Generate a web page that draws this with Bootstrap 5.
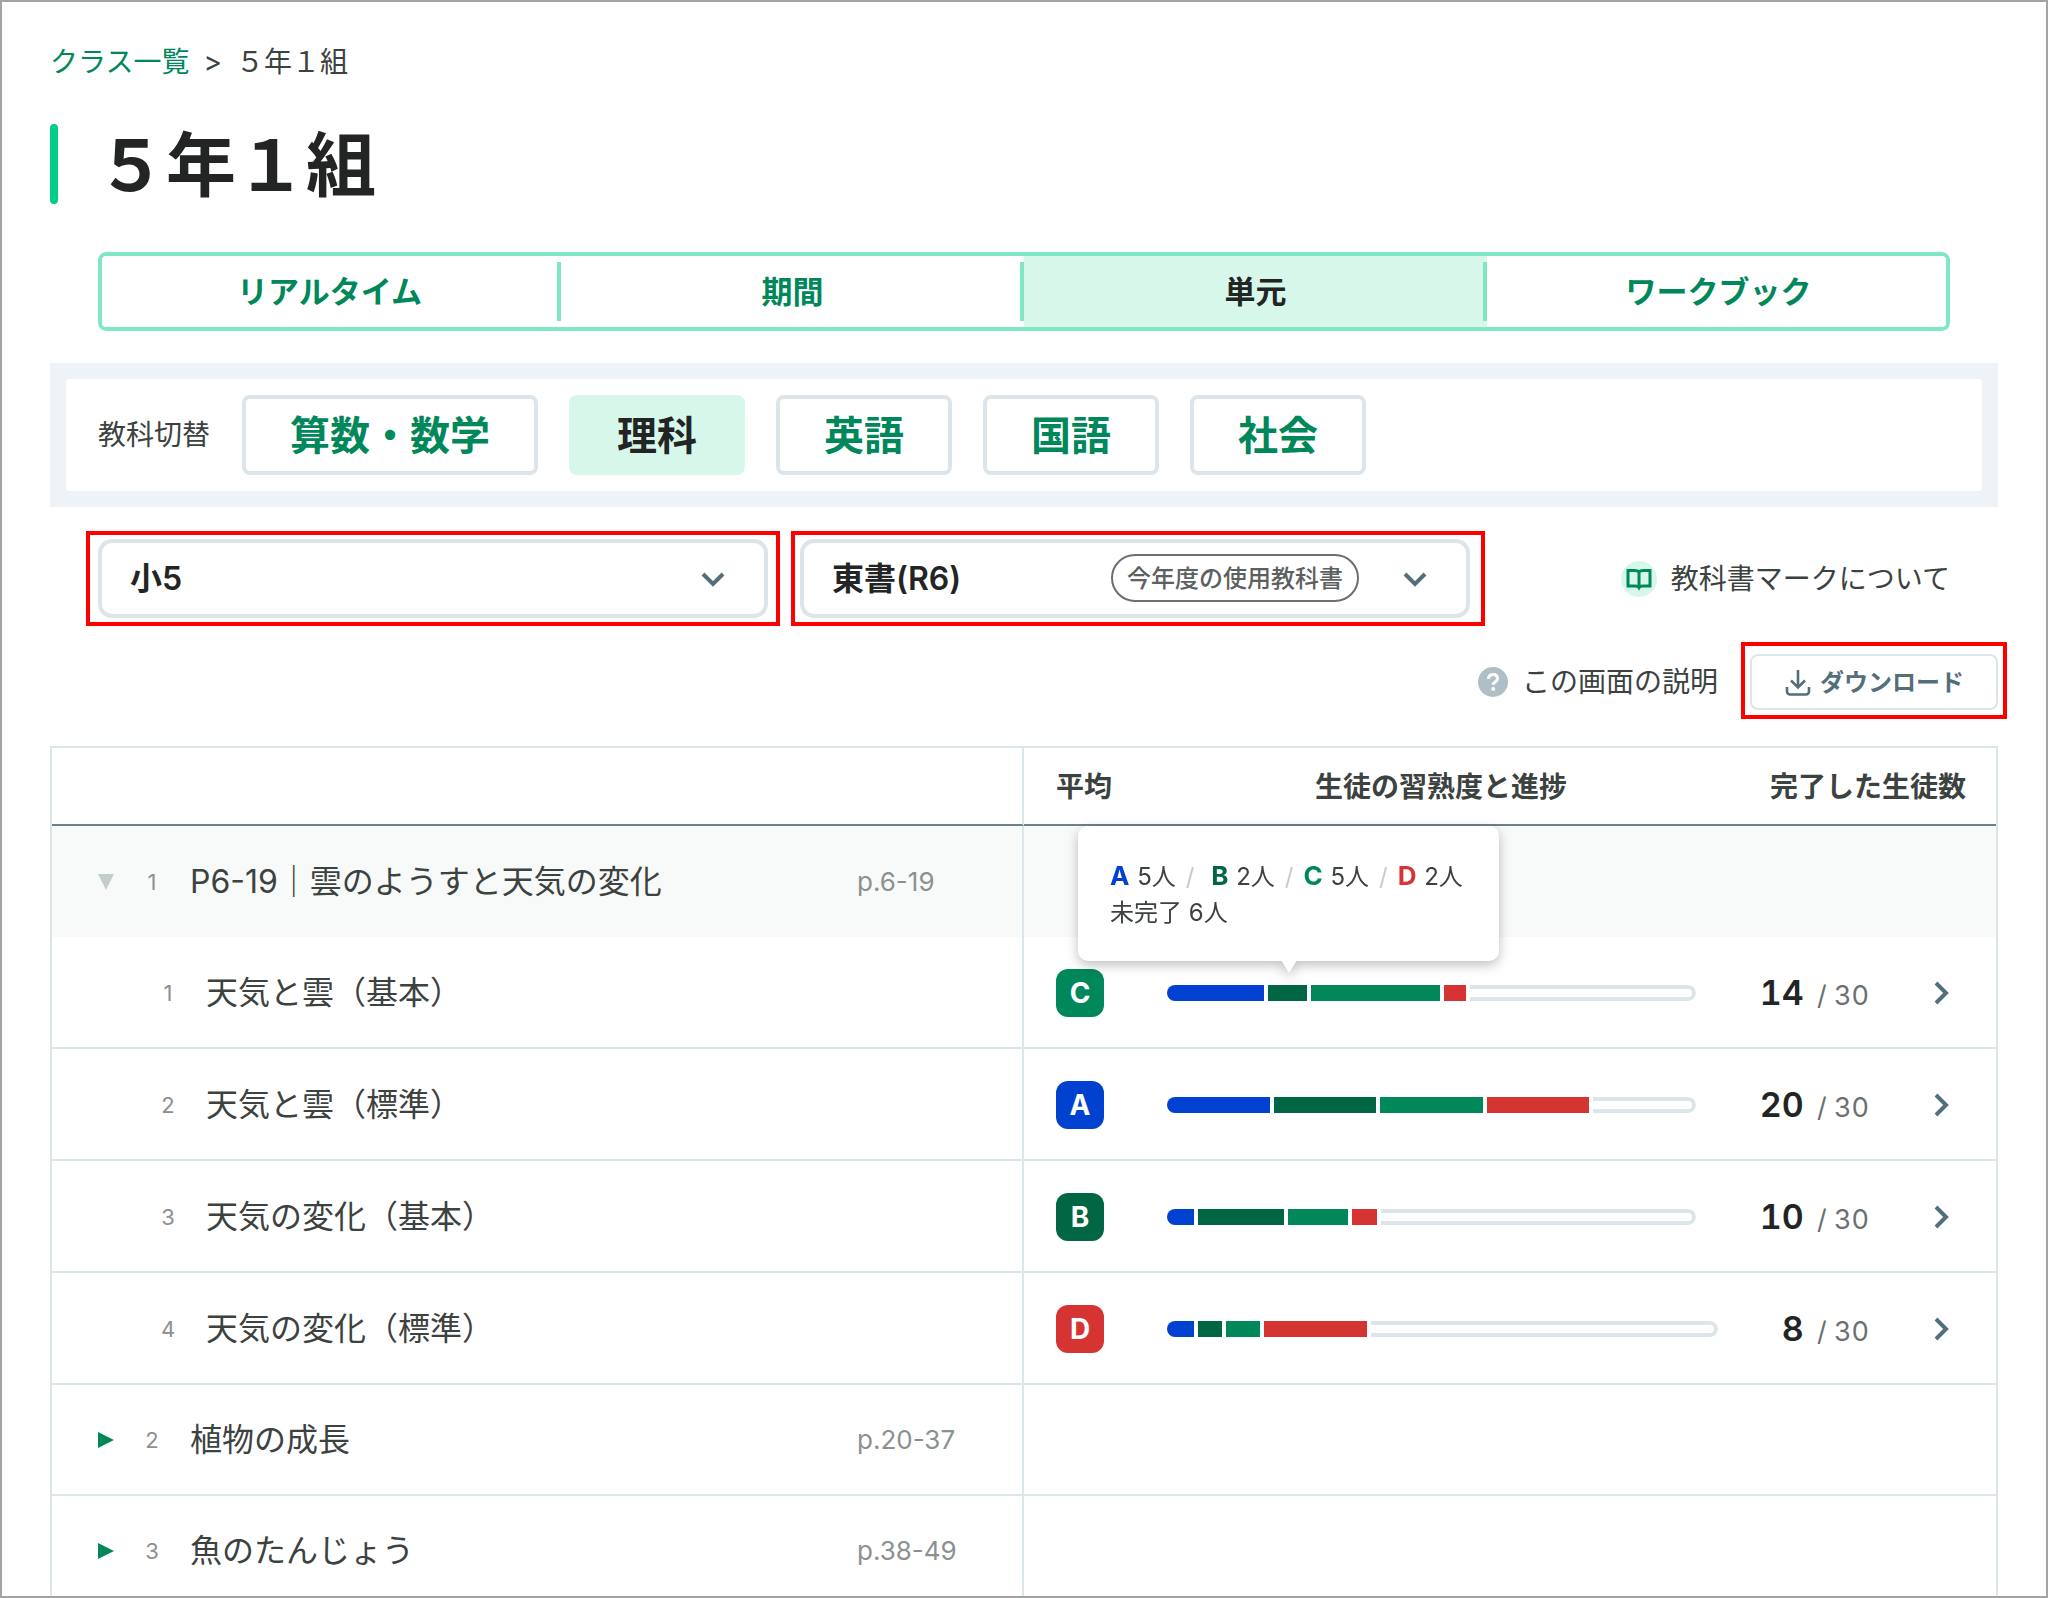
<!DOCTYPE html>
<html lang="ja">
<head>
<meta charset="utf-8">
<meta name="viewport" content="width=device-width, initial-scale=1">
<title>5年1組</title>
<link href="https://cdn.jsdelivr.net/npm/bootstrap@5.3.0/dist/css/bootstrap.min.css" rel="stylesheet">
<style>
:root { --green: #00875a; --dark-green: #006644; --mint: #d8f7eb; --mint-line: #80e7c3; --line: #dce5ea; --slate: #546e7a; --blue: #0041d0; --red: #d63333; --ink: #222524; --text: #3c4240; --muted: #8b9190; }
body { font-family: Inter, "Noto Sans CJK JP", sans-serif; font-size: 28px; line-height: 40px; color: var(--text); }
.page-frame { border: 2px solid #a3a3a3; padding: 38px 48px 0; scrollbar-width: none; }
.crumbs { height: 44px; gap: 14px; }
.crumbs a, .side-link { text-decoration: none; }
.crumbs a { color: var(--green); }
.page-title { height: 80px; line-height: 84px; font-size: 70px; font-weight: 700; color: var(--ink); margin: 40px 0 48px; }
.page-title::before { content: ""; width: 8px; height: 80px; border-radius: 4px; background: #00ce85; margin-right: 38px; }
.inset { margin-left: 48px; margin-right: 48px; }
.view-tabs { position: relative; height: 79px; border-radius: 8px; overflow: hidden; }
.view-tabs::after { content: ""; position: absolute; inset: 0; border: 4px solid var(--mint-line); border-radius: 8px; pointer-events: none; }
.view-tabs .nav-link { position: relative; height: 79px; padding: 0; border-radius: 0; line-height: 79px; font-size: 31px; font-weight: 700; color: var(--green); }
.view-tabs .nav-link.active { background: var(--mint); color: var(--ink); }
.view-tabs .nav-item:not(:last-child) .nav-link::after { content: ""; position: absolute; right: 0; top: 10px; bottom: 10px; width: 4px; background: var(--mint-line); }
.subject-panel { margin-top: 32px; padding: 16px; background: #eef3f8; }
.subject-inner { padding: 16px 32px; gap: 32px; background: #fff; border-radius: 4px; }
.subject-list { gap: 31px; }
.btn-subject { height: 80px; padding: 2px 44px 0; border: 4px solid var(--line); border-radius: 8px; font-size: 40px; line-height: 70px; font-weight: 700; color: var(--green); background: #fff; }
.btn-subject.active { background: var(--mint); border-color: var(--mint); color: var(--ink); }
.filters { margin-top: 32px; gap: 32px; }
.marked { position: relative; }
.marked::after { content: ""; position: absolute; inset: -8px -12px; border: 4px solid #f00; pointer-events: none; }
.marked-book::after { inset: -8px -15px -8px -9px; }
.marked-download::after { inset: -12px -9px -9px; }
.filter-box { width: 670px; }
.filter-box .form-select { height: 79px; border: 4px solid var(--line); border-radius: 14px; padding: 0 28px; font-size: 32px; font-weight: 600; color: var(--ink); background: #fff; }
.filter-box svg { position: absolute; right: 43px; top: 32px; pointer-events: none; }
.year-pill { position: absolute; right: 111px; top: 15px; height: 48px; padding: 0 14px; border: 2px solid #6b6f6e; border-radius: 24px; font-size: 24px; line-height: 46px; font-weight: 500; color: #5c6160; pointer-events: none; }
.side-link { color: var(--text); gap: 14px; }
.actions { margin: 36px 0; gap: 32px; }
.btn-download { height: 56px; padding: 2px 32px 0; border: 2px solid var(--line); border-radius: 8px; font-size: 24px; line-height: 50px; font-weight: 700; color: var(--slate); background: #fff; }
.units { table-layout: fixed; border-collapse: separate; border-spacing: 0; border: 2px solid var(--line); color: var(--text); --bs-table-bg: transparent; }
.units th, .units td { padding: 0; vertical-align: middle; border-bottom: 2px solid var(--line); color: inherit; }
.units th:first-child, .units td:first-child { border-right: 2px solid var(--line); }
.units th { height: 78px; padding-top: 2px; font-weight: 700; border-bottom-color: #6b828e; }
.units thead th:first-child { border-bottom-color: #6b828e; }
.col-grade { width: 88px; }
.col-done { width: 226px; }
.units tr.chapter td { height: 111px; }
.units tr.lesson td { height: 112px; padding-top: 2px; }
.units tr.open td { background: #f8faf9; border-bottom: 0; }
.unit-name { padding-left: 46px; font-size: 32px; line-height: 48px; }
.lesson .unit-name { padding-left: 94px; }
.toggle { border: 0; padding: 0; background: none; line-height: 0; width: 16px; margin-right: 16px; }
.unit-no { width: 44px; margin-right: 16px; text-align: center; font-size: 22px; color: var(--muted); }
.unit-pages { width: 165px; font-size: 26px; color: var(--muted); }
.grade { width: 48px; height: 48px; margin-left: 32px; border-radius: 12px; color: #fff; font-size: 28px; line-height: 48px; font-weight: 700; text-align: center; }
.result { padding-left: 55px; padding-right: 46px; }
.meter { height: 16px; gap: 4px; border-radius: 8px; overflow: hidden; }
.meter span { flex: none; }
.meter .rest { flex: 1 1 0; border: 4px solid var(--line); border-left: 0; border-radius: 0 8px 8px 0; }
.bg-a { background: var(--blue); } .bg-b { background: var(--dark-green); } .bg-c { background: var(--green); } .bg-d { background: var(--red); }
.tx-a { color: var(--blue); } .tx-b { color: var(--dark-green); } .tx-c { color: var(--green); } .tx-d { color: var(--red); }
.tally { margin-left: 64px; margin-right: 64px; font-size: 27px; line-height: 44px; padding-top: 2px; color: #6b706f; font-variant-numeric: tabular-nums; }
.tally strong { font-size: 34px; font-weight: 600; color: var(--ink); margin-right: 6px; }
.meter-wrap { position: relative; }
.tip { position: absolute; left: -89px; bottom: 40px; width: 421px; height: 135px; padding: 32px; background: #fff; border-radius: 10px; font-size: 24px; line-height: 36px; white-space: nowrap; filter: drop-shadow(0 4px 6px rgba(0, 0, 0, .25)); }
.tip::after { content: ""; position: absolute; left: 203px; top: 134px; border: solid transparent; border-width: 13px 8px 0; border-top-color: #fff; }
.tip b { font-size: 26px; margin-right: 1px; }
.tip i { font-style: normal; color: #c3cecb; margin: 0 10px; }
</style>
</head>
<body>
<div class="page-frame vh-100 overflow-auto">
  <nav class="crumbs d-flex align-items-center" aria-label="パンくず">
    <a href="#">クラス一覧</a><span>&gt;</span><span>５年１組</span>
  </nav>
  <h1 class="page-title d-flex">５年１組</h1>

  <ul class="view-tabs nav nav-justified flex-nowrap inset">
    <li class="nav-item"><a class="nav-link" href="#">リアルタイム</a></li>
    <li class="nav-item"><a class="nav-link" href="#">期間</a></li>
    <li class="nav-item"><a class="nav-link active" aria-current="page" href="#">単元</a></li>
    <li class="nav-item"><a class="nav-link" href="#">ワークブック</a></li>
  </ul>

  <section class="subject-panel">
    <div class="subject-inner d-flex align-items-center">
      <span>教科切替</span>
      <div class="subject-list d-flex">
        <button type="button" class="btn btn-subject">算数・数学</button>
        <button type="button" class="btn btn-subject active">理科</button>
        <button type="button" class="btn btn-subject">英語</button>
        <button type="button" class="btn btn-subject">国語</button>
        <button type="button" class="btn btn-subject">社会</button>
      </div>
    </div>
  </section>

  <div class="filters inset d-flex align-items-center">
    <div class="filter-box marked">
      <select class="form-select" aria-label="学年"><option>小5</option></select>
      <svg width="24" height="17" viewBox="0 0 24 17" fill="none" stroke="#546e7a" stroke-width="4"><path d="M2 3l10 10L22 3"/></svg>
    </div>
    <div class="filter-box marked marked-book">
      <select class="form-select" aria-label="教科書"><option>東書(R6)</option></select>
      <span class="year-pill">今年度の使用教科書</span>
      <svg width="24" height="17" viewBox="0 0 24 17" fill="none" stroke="#546e7a" stroke-width="4"><path d="M2 3l10 10L22 3"/></svg>
    </div>
    <a href="#" class="side-link ms-auto d-flex align-items-center">
      <svg width="36" height="36" viewBox="0 0 36 36"><circle cx="18" cy="18" r="18" fill="#d8f7eb"/><path d="M18 11c-1-1.500-3-1.500-5-1.500H7V25h7c2 0 3.500.5 4 1.500.5-1 2-1.500 4-1.500h7V9.500h-6c-2 0-4 0-5 1.500zM18 11v15" fill="none" stroke="#00875a" stroke-width="3"/></svg>
      <span>教科書マークについて</span>
    </a>
  </div>

  <div class="actions d-flex justify-content-end align-items-center">
    <a href="#" class="side-link d-flex align-items-center">
      <svg width="30" height="30" viewBox="0 0 30 30"><circle cx="15" cy="15" r="15" fill="#b0bec5"/><path d="M10.500 12c0-3 2-4.500 4.600-4.500s4.400 1.500 4.400 4c0 3.300-4.300 3.300-4.300 6.300" fill="none" stroke="#fff" stroke-width="3"/><circle cx="15.200" cy="22" r="2" fill="#fff"/></svg>
      <span>この画面の説明</span>
    </a>
    <div class="marked marked-download">
      <button type="button" class="btn btn-download d-flex align-items-center">
        <svg class="me-2" width="28" height="28" viewBox="0 0 28 28" fill="none" stroke="#546e7a" stroke-width="2.600"><path d="M14 1v17M7 11.500l7 7 7-7M3 18v4.500a3 3 0 0 0 3 3h16a3 3 0 0 0 3-3V18"/></svg>
        ダウンロード
      </button>
    </div>
  </div>

  <table class="table units mb-0">
    <colgroup><col class="w-50"><col class="col-grade"><col><col class="col-done"></colgroup>
    <thead>
      <tr><th aria-label="単元"></th><th class="text-end text-nowrap">平均</th><th class="text-center">生徒の習熟度と進捗</th><th class="text-nowrap">完了した生徒数</th></tr>
    </thead>
    <tbody>
      <tr class="chapter open">
        <td><div class="unit-name d-flex align-items-center"><button class="toggle" type="button" aria-label="閉じる"><svg width="16" height="16"><path d="M0 0h16L8 16z" fill="#c3cecb"/></svg></button><span class="unit-no">1</span><span>P6-19｜雲のようすと天気の変化</span><span class="unit-pages ms-auto">p.6-19</span></div></td>
        <td colspan="3"></td>
      </tr>
      <tr class="lesson">
        <td><div class="unit-name d-flex align-items-center"><span class="unit-no">1</span><span>天気と雲（基本）</span></div></td>
        <td><div class="grade bg-c">C</div></td>
        <td colspan="2"><div class="result d-flex align-items-center">
          <div class="meter-wrap flex-grow-1">
            <div class="meter d-flex"><span class="bg-a" style="width:18.4%"></span><span class="bg-b" style="width:7.4%"></span><span class="bg-c" style="width:24.3%"></span><span class="bg-d" style="width:4.2%"></span><span class="rest"></span></div>
            <div class="tip" role="tooltip"><b class="tx-a">A</b> 5人<i>/</i> <b class="tx-b">B</b> 2人<i>/</i><b class="tx-c">C</b> 5人<i>/</i><b class="tx-d">D</b> 2人<br>未完了 6人</div>
          </div>
          <span class="tally"><strong>14</strong> / 30</span>
          <svg width="17" height="24" viewBox="0 0 17 24" fill="none" stroke="#546e7a" stroke-width="4"><path d="M3 2l10 10L3 22"/></svg>
        </div></td>
      </tr>
      <tr class="lesson">
        <td><div class="unit-name d-flex align-items-center"><span class="unit-no">2</span><span>天気と雲（標準）</span></div></td>
        <td><div class="grade bg-a">A</div></td>
        <td colspan="2"><div class="result d-flex align-items-center">
          <div class="meter-wrap flex-grow-1"><div class="meter d-flex"><span class="bg-a" style="width:19.4%"></span><span class="bg-b" style="width:19.4%"></span><span class="bg-c" style="width:19.4%"></span><span class="bg-d" style="width:19.4%"></span><span class="rest"></span></div></div>
          <span class="tally"><strong>20</strong> / 30</span>
          <svg width="17" height="24" viewBox="0 0 17 24" fill="none" stroke="#546e7a" stroke-width="4"><path d="M3 2l10 10L3 22"/></svg>
        </div></td>
      </tr>
      <tr class="lesson">
        <td><div class="unit-name d-flex align-items-center"><span class="unit-no">3</span><span>天気の変化（基本）</span></div></td>
        <td><div class="grade bg-b">B</div></td>
        <td colspan="2"><div class="result d-flex align-items-center">
          <div class="meter-wrap flex-grow-1"><div class="meter d-flex"><span class="bg-a" style="width:5.1%"></span><span class="bg-b" style="width:16.3%"></span><span class="bg-c" style="width:11.4%"></span><span class="bg-d" style="width:4.6%"></span><span class="rest"></span></div></div>
          <span class="tally"><strong>10</strong> / 30</span>
          <svg width="17" height="24" viewBox="0 0 17 24" fill="none" stroke="#546e7a" stroke-width="4"><path d="M3 2l10 10L3 22"/></svg>
        </div></td>
      </tr>
      <tr class="lesson">
        <td><div class="unit-name d-flex align-items-center"><span class="unit-no">4</span><span>天気の変化（標準）</span></div></td>
        <td><div class="grade bg-d">D</div></td>
        <td colspan="2"><div class="result d-flex align-items-center">
          <div class="meter-wrap flex-grow-1"><div class="meter d-flex"><span class="bg-a" style="width:4.9%"></span><span class="bg-b" style="width:4.4%"></span><span class="bg-c" style="width:6.2%"></span><span class="bg-d" style="width:18.6%"></span><span class="rest"></span></div></div>
          <span class="tally"><strong>8</strong> / 30</span>
          <svg width="17" height="24" viewBox="0 0 17 24" fill="none" stroke="#546e7a" stroke-width="4"><path d="M3 2l10 10L3 22"/></svg>
        </div></td>
      </tr>
      <tr class="chapter">
        <td><div class="unit-name d-flex align-items-center"><button class="toggle" type="button" aria-label="開く"><svg width="16" height="16"><path d="M0 0l16 8L0 16z" fill="#00875a"/></svg></button><span class="unit-no">2</span><span>植物の成長</span><span class="unit-pages ms-auto">p.20-37</span></div></td>
        <td colspan="3"></td>
      </tr>
      <tr class="chapter">
        <td><div class="unit-name d-flex align-items-center"><button class="toggle" type="button" aria-label="開く"><svg width="16" height="16"><path d="M0 0l16 8L0 16z" fill="#00875a"/></svg></button><span class="unit-no">3</span><span>魚のたんじょう</span><span class="unit-pages ms-auto">p.38-49</span></div></td>
        <td colspan="3"></td>
      </tr>
    </tbody>
  </table>
</div>
<script src="https://cdn.jsdelivr.net/npm/bootstrap@5.3.0/dist/js/bootstrap.bundle.min.js"></script>
</body>
</html>
